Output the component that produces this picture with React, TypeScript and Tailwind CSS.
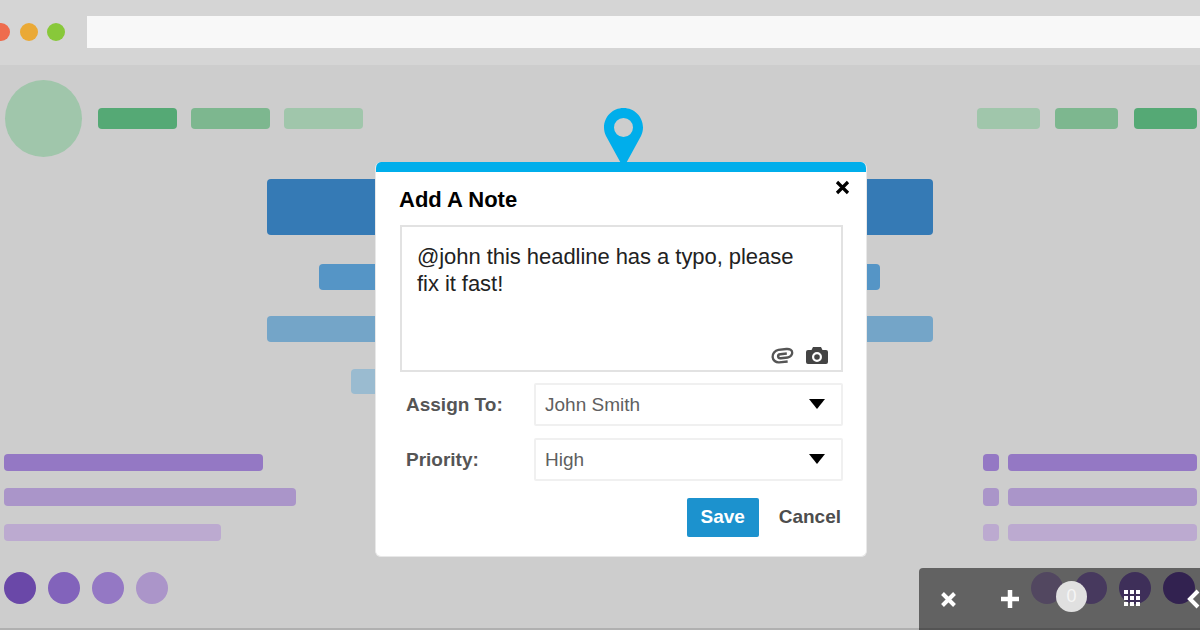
import React from "react";

const Select = ({ label, value }: { label: string; value: string }) => (
  <div className="flex items-center">
    <span className="w-[135px] pl-[7px] pt-[1px] text-[19px] font-bold text-[#555555]">{label}</span>
    <div className="flex h-[43px] w-[309px] items-center justify-between rounded-[2px] border-2 border-[#f0f0f0] pl-[9px] pr-[16px] pt-[1px] text-[19px] text-[#5f5f5f]">
      <span>{value}</span>
      <svg width="16" height="10" viewBox="0 0 16 10" className="-mt-[3px]"><path d="M0 0h16L8 10z" fill="#000" /></svg>
    </div>
  </div>
);

const Pill = ({ c, w }: { c: string; w: string }) => <div className={`h-[21px] rounded-[4px] ${c} ${w}`} />;

export default function App() {
  return (
    <div className="relative flex h-[630px] w-[1200px] flex-col overflow-hidden bg-[#cdcdcd] font-['Liberation_Sans',Arial,sans-serif]">
      <div className="flex h-[65px] shrink-0 items-center bg-[#d5d5d5] pb-[1px]">
        <div className="-ml-[8px] h-[18px] w-[18px] rounded-full bg-[#ee6c4d]" />
        <div className="ml-[10px] h-[18px] w-[18px] rounded-full bg-[#eaa936]" />
        <div className="ml-[9px] h-[18px] w-[18px] rounded-full bg-[#88c83a]" />
        <div className="ml-[22px] h-[32px] flex-1 bg-[#f8f8f8]" />
      </div>

      <div className="flex h-[565px] flex-col border-b-2 border-[#b0b0b0]">
        <div className="mt-[15px] flex items-center justify-between pl-[5px] pr-[3px]">
          <div className="flex items-center">
            <div className="h-[77px] w-[77px] rounded-full bg-[#a0c6ab]" />
            <div className="ml-[16px] flex gap-[14px]">
              <Pill c="bg-[#55a975]" w="w-[79px]" />
              <Pill c="bg-[#7db78f]" w="w-[79px]" />
              <Pill c="bg-[#a0c6ab]" w="w-[79px]" />
            </div>
          </div>
          <div className="flex">
            <Pill c="bg-[#a0c6ab]" w="w-[63px]" />
            <div className="ml-[15px]"><Pill c="bg-[#7db78f]" w="w-[63px]" /></div>
            <div className="ml-[16px]"><Pill c="bg-[#55a975]" w="w-[63px]" /></div>
          </div>
        </div>

        <div className="mt-[22px] flex flex-col items-center pr-[1px]">
          <div className="h-[56px] w-[666px] rounded-[4px] bg-[#357ab5]" />
          <div className="mt-[29px] h-[26px] w-[561px] rounded-[4px] bg-[#5595c6]" />
          <div className="mt-[26px] h-[26px] w-[666px] rounded-[4px] bg-[#74a5c8]" />
          <div className="mt-[27px] h-[25px] w-[498px] rounded-[4px] bg-[#9abbd0]" />
        </div>

        <div className="mt-[60px] flex justify-between pl-[4px] pr-[3px]">
          <div className="flex flex-col">
            <div className="h-[17px] w-[259px] rounded-[4px] bg-[#9478c4]" />
            <div className="mt-[17px] h-[18px] w-[292px] rounded-[4px] bg-[#aa95c9]" />
            <div className="mt-[18px] h-[17px] w-[217px] rounded-[4px] bg-[#bcaad0]" />
          </div>
          <div className="flex flex-col">
            <div className="flex gap-[9px]">
              <div className="h-[17px] w-[16px] rounded-[4px] bg-[#9478c4]" />
              <div className="h-[17px] w-[189px] rounded-[4px] bg-[#9478c4]" />
            </div>
            <div className="mt-[17px] flex gap-[9px]">
              <div className="h-[18px] w-[16px] rounded-[4px] bg-[#aa95c9]" />
              <div className="h-[18px] w-[189px] rounded-[4px] bg-[#aa95c9]" />
            </div>
            <div className="mt-[18px] flex gap-[9px]">
              <div className="h-[17px] w-[16px] rounded-[4px] bg-[#bcaad0]" />
              <div className="h-[17px] w-[189px] rounded-[4px] bg-[#bcaad0]" />
            </div>
          </div>
        </div>

        <div className="mt-[31px] flex justify-between pl-[4px] pr-[5px]">
          <div className="flex gap-[12px]">
            <div className="h-[32px] w-[32px] rounded-full bg-[#6a48a8]" />
            <div className="h-[32px] w-[32px] rounded-full bg-[#8263bb]" />
            <div className="h-[32px] w-[32px] rounded-full bg-[#9478c4]" />
            <div className="h-[32px] w-[32px] rounded-full bg-[#ab95c9]" />
          </div>
          <div className="flex gap-[12px]">
            <div className="h-[32px] w-[32px] rounded-full bg-[#ab95c9]" />
            <div className="h-[32px] w-[32px] rounded-full bg-[#9478c4]" />
            <div className="h-[32px] w-[32px] rounded-full bg-[#8263bb]" />
            <div className="h-[32px] w-[32px] rounded-full bg-[#6a48a8]" />
          </div>
        </div>
      </div>

      {/* location pin */}
      <svg className="absolute left-[604px] top-[108px]" width="39" height="60" viewBox="0 0 39 60">
        <path
          fillRule="evenodd"
          fill="#00aeeb"
          d="M19.5 0C30.3 0 39 8.7 39 19.5c0 3.2-.8 6-2 8.5L19.5 60 2 28c-1.2-2.500-2-5.300-2-8.500C0 8.700 8.700 0 19.500 0zm0 10a9.500 9.500 0 1 0 0 19 9.500 9.500 0 0 0 0-19z"
        />
      </svg>

      {/* note dialog */}
      <div className="absolute left-[375px] top-[162px] flex h-[395px] w-[492px] flex-col overflow-hidden rounded-[6px] border-x border-b border-[#e8e8e8] bg-white">
        <div className="-mx-px h-[10px] shrink-0 bg-[#00aeeb]" />
        <div className="relative flex flex-1 flex-col px-[23px]">
          <svg className="absolute right-[16px] top-[8px]" width="15" height="15" viewBox="0 0 15 15">
            <path d="M2 2l11 11M13 2L2 13" stroke="#000" strokeWidth="3.200" />
          </svg>
          <h2 className="mt-[16px] text-[22px] font-bold leading-[24px] text-black">Add A Note</h2>
          <div className="relative ml-px mt-[13px] h-[147px] w-[443px] border-2 border-[#e2e2e2] px-[15px] pt-[16px] text-[22px] leading-[27px] tracking-[-0.05px] text-[#222222]">
            <p className="w-[385px]">@john this headline has a typo, please fix it fast!</p>
            <div className="absolute bottom-[6px] right-[13px] flex items-center gap-[12px]">
              <svg width="23" height="17" viewBox="0 0 23 17" fill="none" className="-rotate-6">
                <path d="M16 15H7.500C4 15 1.500 12 1.500 9S4.500 2.500 8 2.500H16C19.500 2.500 21.500 4.500 21.500 6.500S19.500 11 16.500 11H9.500C8 11 7 10 7 9S8 7 9.500 7H16" stroke="#555555" strokeWidth="2.400" />
              </svg>
              <svg width="22" height="17" viewBox="0 0 22 17">
                <path
                  fillRule="evenodd"
                  fill="#444444"
                  d="M7 0h8l1.500 3H20a2 2 0 0 1 2 2v10a2 2 0 0 1-2 2H2a2 2 0 0 1-2-2V5a2 2 0 0 1 2-2h3.500zM11 5a5 5 0 1 0 0 10 5 5 0 0 0 0-10zm0 2.200a2.800 2.800 0 1 1 0 5.600 2.800 2.800 0 0 1 0-5.600z"
                />
              </svg>
            </div>
          </div>
          <div className="mt-[11px] flex flex-col gap-[12px]">
            <Select label="Assign To:" value="John Smith" />
            <Select label="Priority:" value="High" />
          </div>
          <div className="mt-[17px] flex items-center justify-end gap-[20px] pr-[2px]">
            <button className="h-[39px] w-[72px] rounded-[2px] bg-[#1c92ce] text-[19px] font-bold text-white">Save</button>
            <span className="text-[19px] font-bold text-[#4d4d4d]">Cancel</span>
          </div>
        </div>
      </div>

      {/* floating toolbar */}
      <div className="absolute left-[919px] top-[568px] flex h-[62px] w-[281px] rounded-tl-[4px] bg-black/[0.52]">
        <svg className="absolute left-[21px] top-[23px]" width="17" height="17" viewBox="0 0 17 17">
          <path d="M2.500 2.500l12 12M14.500 2.500l-12 12" stroke="#fff" strokeWidth="4" />
        </svg>
        <svg className="absolute left-[81px] top-[21px]" width="20" height="20" viewBox="0 0 20 20">
          <path d="M10 1v18M1 10h18" stroke="#fff" strokeWidth="4.500" />
        </svg>
        <div className="absolute left-[137px] top-[13px] flex h-[31px] w-[31px] items-center justify-center rounded-full bg-[#e0e0e0] text-[18px] text-[#f5f5f5]">0</div>
        <div className="absolute left-[205px] top-[22px] grid grid-cols-3 gap-[2px]">
          {Array.from({ length: 9 }).map((_, i) => (
            <div key={i} className="h-[4px] w-[4px] bg-white" />
          ))}
        </div>
        <svg className="absolute left-[268px] top-[21px]" width="13" height="20" viewBox="0 0 13 20">
          <path d="M11 2L3 10l8 8" fill="none" stroke="#fff" strokeWidth="4" />
        </svg>
      </div>
    </div>
  );
}
